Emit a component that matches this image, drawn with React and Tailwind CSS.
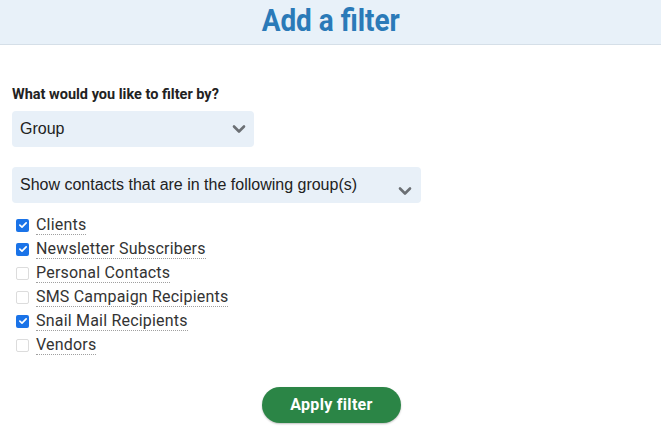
import React, { useState } from 'react';

const GROUPS = [
  { name: 'Clients', checked: true },
  { name: 'Newsletter Subscribers', checked: true },
  { name: 'Personal Contacts', checked: false },
  { name: 'SMS Campaign Recipients', checked: false },
  { name: 'Snail Mail Recipients', checked: true },
  { name: 'Vendors', checked: false },
];

const Chevron = ({ className }) => (
  <svg viewBox="0 0 14 10" className={className} fill="none">
    <path d="M2 2.5 L7 7.5 L12 2.5" stroke="#6b6f74" strokeWidth="2.6" strokeLinecap="round" strokeLinejoin="round" />
  </svg>
);

const Box = ({ checked, onClick }) =>
  checked ? (
    <span onClick={onClick} className="w-[13px] h-[13px] rounded-[2px] bg-[#1a73e8] flex items-center justify-center shrink-0">
      <svg viewBox="0 0 12 12" className="w-[10px] h-[10px]" fill="none">
        <path d="M2.2 6.2 L4.8 8.6 L9.8 3.4" stroke="white" strokeWidth="2" strokeLinecap="round" strokeLinejoin="round" />
      </svg>
    </span>
  ) : (
    <span onClick={onClick} className="w-[13px] h-[13px] rounded-[2px] border border-[#dcdcdc] bg-white shrink-0" />
  );

export default function App() {
  const [groups, setGroups] = useState(GROUPS);
  const toggle = (i) => setGroups((g) => g.map((x, j) => (j === i ? { ...x, checked: !x.checked } : x)));

  return (
    <div className="w-[661px] h-[431px] bg-white overflow-hidden font-['Roboto',sans-serif]">
      <div className="h-[45px] bg-[#e8f1f9] border-b border-[#d5dfe8] flex items-center justify-center">
        <h1 className="inline-block scale-x-[0.9] text-[31px] font-bold text-[#2a7ab8] leading-none -mt-[3px]">Add a filter</h1>
      </div>

      <div className="px-3 pt-[43px]">
        <p className="text-[14.5px] font-bold text-[#222] leading-[14px]">What would you like to filter by?</p>

        <div className="mt-[9px] w-[242px] h-[36px] rounded-[4px] bg-[#e8f0f8] flex items-center justify-between pl-2 pr-[8px] font-['Liberation_Sans',Arial,sans-serif]">
          <span className="text-[16px] text-[#222]">Group</span>
          <Chevron className="w-[14px] h-[10px]" />
        </div>

        <div className="mt-[20px] w-[409px] h-[36px] rounded-[4px] bg-[#e8f0f8] flex items-center justify-between pl-2 pr-[9px] font-['Liberation_Sans',Arial,sans-serif]">
          <span className="text-[16px] text-[#222]">Show contacts that are in the following group(s)</span>
          <Chevron className="w-[14px] h-[10px] mt-[12px]" />
        </div>

        <ul className="mt-[10px] pl-1">
          {groups.map((g, i) => (
            <li key={g.name} className="h-[24px] flex items-center gap-[7px]">
              <Box checked={g.checked} onClick={() => toggle(i)} />
              <span className="text-[16px] text-[#333] leading-[19px] border-b border-dotted border-[#a0a0a0] tracking-[0.2px]">{g.name}</span>
            </li>
          ))}
        </ul>

        <div className="flex justify-center mt-[30px]">
          <button className="w-[139px] h-[36px] rounded-full bg-[#2b8546] text-white text-[16px] font-bold tracking-[0.3px] shadow-[0_1px_2px_rgba(0,0,0,0.25)] ml-[2px]">
            Apply filter
          </button>
        </div>
      </div>
    </div>
  );
}
